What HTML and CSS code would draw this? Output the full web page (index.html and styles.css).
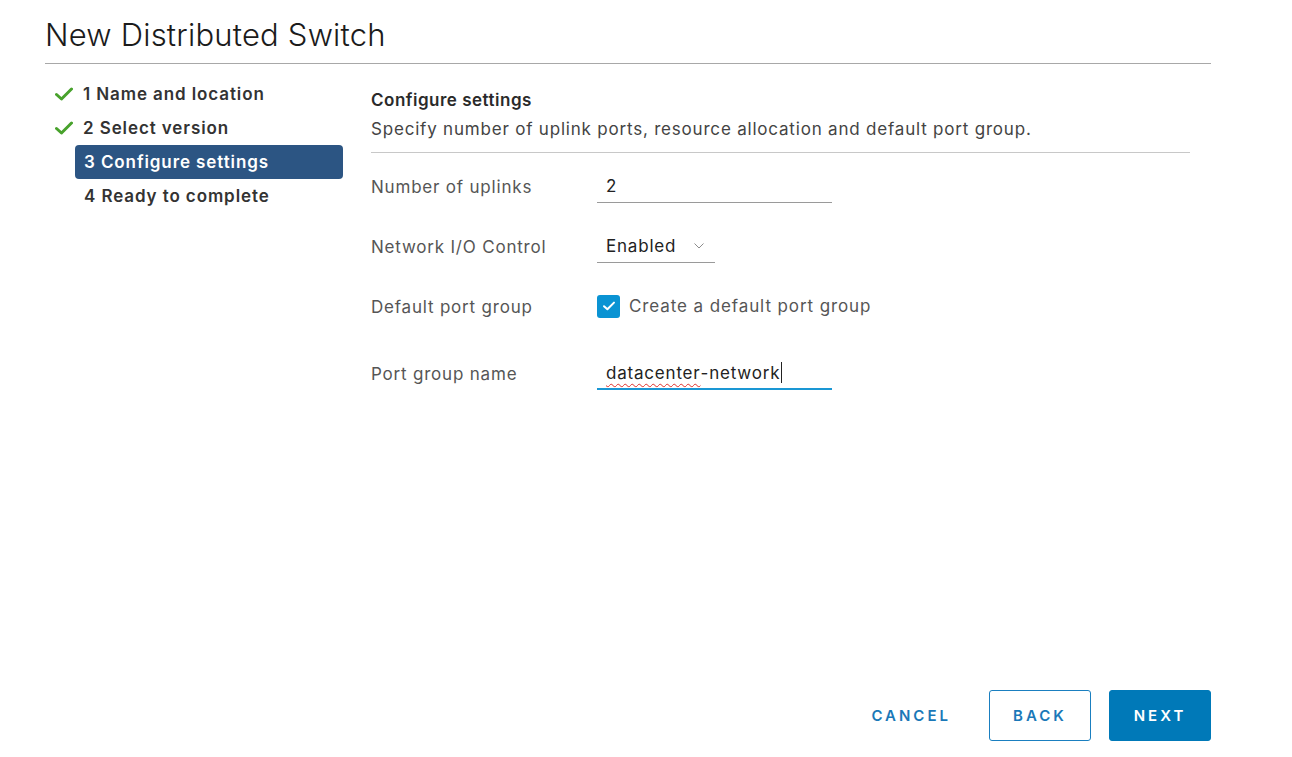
FILE: index.html
```html
<!DOCTYPE html>
<html lang="en">
<head>
<meta charset="utf-8">
<title>New Distributed Switch</title>
<link rel="stylesheet" href="styles.css">
</head>
<body>
<div class="dialog">
  <header class="dialog-header">
    <h1 class="dialog-title">New Distributed Switch</h1>
  </header>
  <div class="dialog-body">
    <nav class="steps">
      <div class="step done">
        <svg class="step-check" viewBox="0 0 18 14" width="18" height="14"><path d="M1.5 7.5 L6.5 12 L16.5 2" fill="none" stroke="#48a22c" stroke-width="3" stroke-linecap="round" stroke-linejoin="round"/></svg>
        <span>1 Name and location</span>
      </div>
      <div class="step done">
        <svg class="step-check" viewBox="0 0 18 14" width="18" height="14"><path d="M1.5 7.5 L6.5 12 L16.5 2" fill="none" stroke="#48a22c" stroke-width="3" stroke-linecap="round" stroke-linejoin="round"/></svg>
        <span>2 Select version</span>
      </div>
      <div class="step active"><span>3 Configure settings</span></div>
      <div class="step"><span>4 Ready to complete</span></div>
    </nav>
    <main class="content">
      <h2 class="content-title">Configure settings</h2>
      <p class="content-desc">Specify number of uplink ports, resource allocation and default port group.</p>
      <div class="form">
        <div class="row">
          <label class="label">Number of uplinks</label>
          <div class="field input"><span>2</span></div>
        </div>
        <div class="row">
          <label class="label">Network I/O Control</label>
          <div class="field select"><span>Enabled</span>
            <svg class="chevron" viewBox="0 0 10 6" width="10" height="6"><path d="M0.5 0.5 L5 5 L9.5 0.5" fill="none" stroke="#8c8c8c" stroke-width="1"/></svg>
          </div>
        </div>
        <div class="row">
          <label class="label">Default port group</label>
          <div class="checkbox-wrap">
            <span class="checkbox"><svg viewBox="0 0 14 12" width="14" height="12"><path d="M2 6.2 L5.4 9.3 L12 2.6" fill="none" stroke="#fff" stroke-width="2" stroke-linecap="round" stroke-linejoin="round"/></svg></span>
            <span class="checkbox-label">Create a default port group</span>
          </div>
        </div>
        <div class="row row-spaced">
          <label class="label">Port group name</label>
          <div class="field input focused"><span class="misspelled">datacenter</span><span>-network</span><span class="caret"></span></div>
        </div>
      </div>
    </main>
  </div>
  <footer class="dialog-footer">
    <button class="btn btn-link">CANCEL</button>
    <button class="btn btn-outline">BACK</button>
    <button class="btn btn-primary">NEXT</button>
  </footer>
</div>
</body>
</html>
```

FILE: styles.css
```css
* { box-sizing: border-box; }
html, body { margin: 0; padding: 0; background: #fff; }
body {
  font-family: Inter, "Open Sans", "Liberation Sans", sans-serif;
  color: #333;
}
.dialog {
  width: 1292px;
  height: 757px;
  padding: 0 81px 16px 45px;
  display: flex;
  flex-direction: column;
}
.dialog-header {
  border-bottom: 1px solid #a8a8a8;
  padding-top: 16px;
  height: 64px;
}
.dialog-title {
  margin: 0;
  font-size: 31px;
  line-height: 38px;
  font-weight: 300;
  letter-spacing: 0.2px;
  color: #1b1b1b;
}
.dialog-body {
  flex: 1;
  display: flex;
  padding-top: 13px;
}
.steps {
  width: 298px;
  display: flex;
  flex-direction: column;
  padding-left: 10px;
}
.step {
  height: 34px;
  display: flex;
  align-items: center;
  font-size: 17px;
  font-weight: 600;
  letter-spacing: 0.9px;
  color: #333;
}
.step-check { margin-right: 10px; flex: none; }
.step:not(.done) { padding-left: 29px; }
.step.active {
  margin-left: 20px;
  padding-left: 9px;
  background: #2c5583;
  color: #fff;
  border-radius: 4px;
}
.content {
  flex: 1;
  padding-left: 28px;
  padding-right: 21px;
}
.content-title {
  margin: 0;
  font-size: 17px;
  line-height: 20px;
  font-weight: 600;
  letter-spacing: 0.5px;
  color: #2a2a2a;
  padding-top: 13px;
}
.content-desc {
  margin: 9px 0 0;
  font-size: 17px;
  line-height: 20px;
  letter-spacing: 0.8px;
  color: #444;
  padding-bottom: 13px;
  border-bottom: 1px solid #c8c8c8;
}
.form { padding-top: 14px; }
.row {
  display: flex;
  align-items: center;
  height: 36px;
  margin-bottom: 24px;
}
.row-spaced { margin-top: 31px; }
.label {
  width: 226px;
  flex: none;
  font-size: 17px;
  letter-spacing: 0.8px;
  color: #565656;
  padding-top: 3px;
}
.field {
  height: 36px;
  display: flex;
  align-items: center;
  padding-left: 9px;
  padding-top: 3px;
  border-bottom: 1px solid #9a9a9a;
  font-size: 17px;
  letter-spacing: 0.8px;
  color: #222;
}
.input { width: 235px; }
.select { width: 118px; }
.chevron { margin-left: 18px; }
.focused { border-bottom: 2px solid #1a97d4; }
.misspelled {
  text-decoration: underline wavy #e0302a;
  text-decoration-thickness: 1px;
  text-underline-offset: 4px;
  text-decoration-skip-ink: none;
}
.caret {
  display: inline-block;
  width: 1px;
  height: 21px;
  background: #222;
  margin-left: 1px;
}
.checkbox-wrap { display: flex; align-items: center; padding-top: 2px; }
.checkbox {
  width: 23px;
  height: 23px;
  border-radius: 3px;
  background: #0a93d3;
  display: flex;
  align-items: center;
  justify-content: center;
  margin-right: 9px;
}
.checkbox-label { font-size: 17px; letter-spacing: 0.9px; color: #565656; }
.dialog-footer {
  display: flex;
  justify-content: flex-end;
  align-items: center;
  gap: 18px;
}
.btn {
  height: 51px;
  min-width: 102px;
  font-family: Inter, "Open Sans", "Liberation Sans", sans-serif;
  font-size: 15px;
  font-weight: 600;
  letter-spacing: 3px;
  border-radius: 3px;
  cursor: pointer;
  padding: 0 18px;
}
.btn-link {
  background: transparent;
  border: none;
  color: #1a78b8;
  margin-right: 2px;
}
.btn-outline {
  background: #fff;
  border: 1px solid #1a7fc0;
  color: #1a78b8;
}
.btn-primary {
  background: #0079b8;
  border: 1px solid #0079b8;
  color: #fff;
}
```
